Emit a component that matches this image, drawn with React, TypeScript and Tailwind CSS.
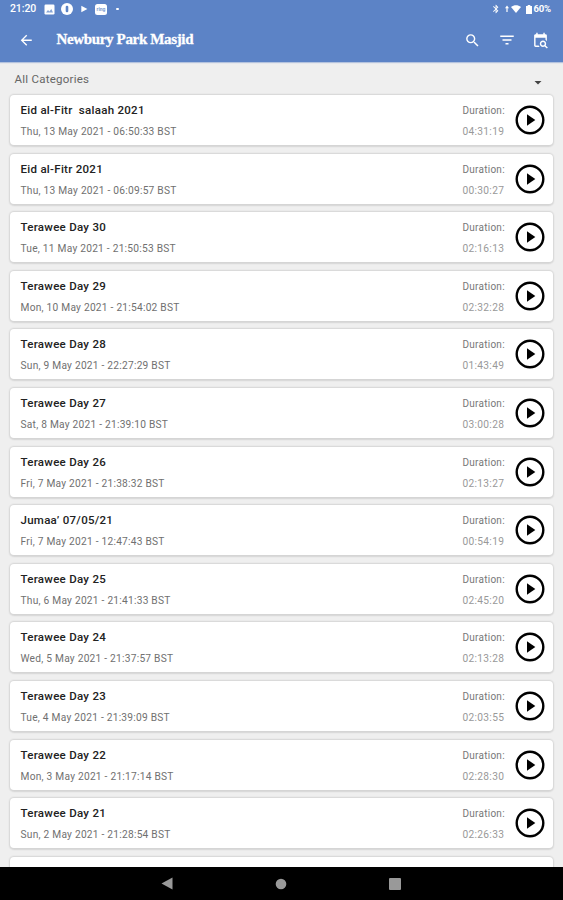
import React from "react";
import { MdArrowBack, MdSearch, MdFilterList, MdBluetooth } from "react-icons/md";

type Recording = { title: string; date: string; duration: string };

const recordings: Recording[] = [
  { title: "Eid al-Fitr  salaah 2021", date: "Thu, 13 May 2021 - 06:50:33 BST", duration: "04:31:19" },
  { title: "Eid al-Fitr 2021", date: "Thu, 13 May 2021 - 06:09:57 BST", duration: "00:30:27" },
  { title: "Terawee Day 30", date: "Tue, 11 May 2021 - 21:50:53 BST", duration: "02:16:13" },
  { title: "Terawee Day 29", date: "Mon, 10 May 2021 - 21:54:02 BST", duration: "02:32:28" },
  { title: "Terawee Day 28", date: "Sun, 9 May 2021 - 22:27:29 BST", duration: "01:43:49" },
  { title: "Terawee Day 27", date: "Sat, 8 May 2021 - 21:39:10 BST", duration: "03:00:28" },
  { title: "Terawee Day 26", date: "Fri, 7 May 2021 - 21:38:32 BST", duration: "02:13:27" },
  { title: "Jumaa’ 07/05/21", date: "Fri, 7 May 2021 - 12:47:43 BST", duration: "00:54:19" },
  { title: "Terawee Day 25", date: "Thu, 6 May 2021 - 21:41:33 BST", duration: "02:45:20" },
  { title: "Terawee Day 24", date: "Wed, 5 May 2021 - 21:37:57 BST", duration: "02:13:28" },
  { title: "Terawee Day 23", date: "Tue, 4 May 2021 - 21:39:09 BST", duration: "02:03:55" },
  { title: "Terawee Day 22", date: "Mon, 3 May 2021 - 21:17:14 BST", duration: "02:28:30" },
  { title: "Terawee Day 21", date: "Sun, 2 May 2021 - 21:28:54 BST", duration: "02:26:33" },
];

function StatusBar() {
  return (
    <div className="flex h-[18px] items-center pl-[10px] pr-[12px] text-white">
      <span className="w-[34px] whitespace-nowrap text-[10.5px] font-medium leading-[18px] tracking-[-0.1px]">21:20</span>
      <svg width="11" height="11" viewBox="0 0 11 11">
        <rect x="0.5" y="0.5" width="10" height="10" rx="1.2" fill="white" />
        <path d="M2 8.5l2-2.6 1.4 1.6 1.9-2.4L9 8.5z" fill="#86a4d6" />
      </svg>
      <svg className="ml-[6px]" width="12" height="12" viewBox="0 0 12 12">
        <circle cx="6" cy="6" r="6" fill="white" />
        <rect x="4.7" y="2.8" width="2.6" height="6.4" rx="1.2" fill="#5c83c6" />
      </svg>
      <svg className="ml-[8px]" width="7" height="8" viewBox="0 0 7 8">
        <path d="M0.3 0.8L6.4 4 0.3 7.2z" fill="white" />
      </svg>
      <span className="ml-[7px] flex h-[11px] w-[12px] items-center justify-center rounded-[2.5px] bg-white text-[5px] font-bold leading-none text-[#7d9cd1]">ring</span>
      <span className="ml-[9px] size-[2.5px] rounded-full bg-white" />
      <div className="ml-auto flex items-center">
        <MdBluetooth size={10} />
        <svg className="ml-[4px]" width="4" height="9" viewBox="0 0 4 9">
          <path d="M2 0.5L4 3.2H2.6V7H1.4V3.2H0z" fill="white" />
        </svg>
        <svg className="ml-[2px]" width="10" height="8" viewBox="0 0 10 8">
          <path d="M0 1.9C3 -.3 7 -.3 10 1.9L5 8z" fill="white" />
        </svg>
        <svg className="ml-[5px]" width="6" height="9" viewBox="0 0 6 9">
          <path d="M1.7 0h2.6v1H6v8H0V1h1.7z" fill="white" />
        </svg>
        <span className="ml-[1px] text-[9.5px] font-bold leading-[18px] tracking-[-0.1px]">60%</span>
      </div>
    </div>
  );
}

function AppBar() {
  return (
    <div className="flex h-[44px] items-center pl-[18px] pr-[14px] text-white">
      <MdArrowBack size={16.5} />
      <h1 className="mb-[2px] ml-[22px] whitespace-nowrap font-['Liberation_Serif',serif] text-[15px] font-bold leading-5 tracking-[-0.35px] [-webkit-text-stroke:0.3px_white]">
        Newbury Park Masjid
      </h1>
      <div className="ml-auto flex items-center gap-[16.5px]">
        <MdSearch size={17} />
        <MdFilterList size={18} />
        <svg width="17" height="17" viewBox="0 0 24 24" fill="currentColor">
          <path d="M15.5 12C18 12 20 14 20 16.5c0 .88-.25 1.71-.69 2.4L22.39 22 21 23.39l-3.12-3.07c-.69.43-1.51.68-2.38.68C13 21 11 19 11 16.5S13 12 15.5 12m0 2a2.5 2.5 0 0 0 0 5 2.5 2.5 0 0 0 0-5M19 8H5v11h4.5c.31.75.76 1.42 1.31 2H5c-1.11 0-2-.9-2-2V5c0-1.11.89-2 2-2h1V1h2v2h8V1h2v2h1a2 2 0 0 1 2 2v8.03c-.5-.8-1.19-1.49-2-2.03z" />
        </svg>
      </div>
    </div>
  );
}

function PlayButton() {
  return (
    <button aria-label="Play">
      <svg width="30" height="30" viewBox="0 0 30 30">
        <circle cx="15" cy="15" r="13.3" fill="none" stroke="black" strokeWidth="2.4" />
        <path d="M12 9.2L20.3 15 12 20.8z" fill="black" />
      </svg>
    </button>
  );
}

function RecordingCard({ title, date, duration }: Recording) {
  return (
    <article className="flex h-[50px] shrink-0 items-center rounded-[4px] bg-white pl-[10.5px] pr-[8.5px] shadow-[0_0.5px_1.5px_1px_rgba(0,0,0,0.11)]">
      <div className="flex-1 whitespace-pre pt-[3px]">
        <h2 className="text-[11.5px] font-medium leading-[21px] tracking-[0.28px] text-[#222]">{title}</h2>
        <p className="text-[10.2px] leading-[22px] tracking-[0.24px] text-[#707070]">{date}</p>
      </div>
      <div className="w-[52px] whitespace-nowrap pt-[3px]">
        <p className="text-[10px] leading-[21px] tracking-[0.25px] text-[#777]">Duration:</p>
        <p className="text-[10.2px] leading-[22px] tracking-[0.3px] text-[#999]">{duration}</p>
      </div>
      <PlayButton />
    </article>
  );
}

export default function App() {
  return (
    <div className="flex h-[900px] w-[563px] flex-col overflow-hidden bg-[#efefef] font-[Roboto,sans-serif]">
      <header className="h-[62px] shrink-0 bg-[#5c83c6] shadow-[0_1px_1px_rgba(92,131,198,0.4)]">
        <StatusBar />
        <AppBar />
      </header>
      <div className="flex h-[31px] shrink-0 items-center pl-[14.5px] pr-[21px]">
        <span className="mt-[4px] text-[11.5px] leading-[31px] tracking-[0.25px] text-[#666]">All Categories</span>
        <svg className="ml-auto mt-[11px]" width="8" height="4" viewBox="0 0 8 4">
          <path d="M0.5 0h7L4 3.6z" fill="#444" />
        </svg>
      </div>
      <main className="flex min-h-0 flex-1 flex-col gap-[8.6px] overflow-hidden px-[10px] pt-[2px]">
        {recordings.map((item) => (
          <RecordingCard key={item.title} {...item} />
        ))}
        <div className="h-[50px] shrink-0 rounded-[4px] bg-white shadow-[0_0.5px_1.5px_1px_rgba(0,0,0,0.11)]" />
      </main>
      <nav className="flex h-[33px] shrink-0 items-center justify-center gap-[102px] bg-black pr-px">
        <svg width="12" height="13" viewBox="0 0 12 13">
          <path d="M0.5 6.5L11.5 0.5v12z" fill="#999" />
        </svg>
        <svg width="12" height="12" viewBox="0 0 12 12">
          <circle cx="6" cy="6" r="5.3" fill="#999" />
        </svg>
        <span className="size-[12px] rounded-[1px] bg-[#999]" />
      </nav>
    </div>
  );
}
